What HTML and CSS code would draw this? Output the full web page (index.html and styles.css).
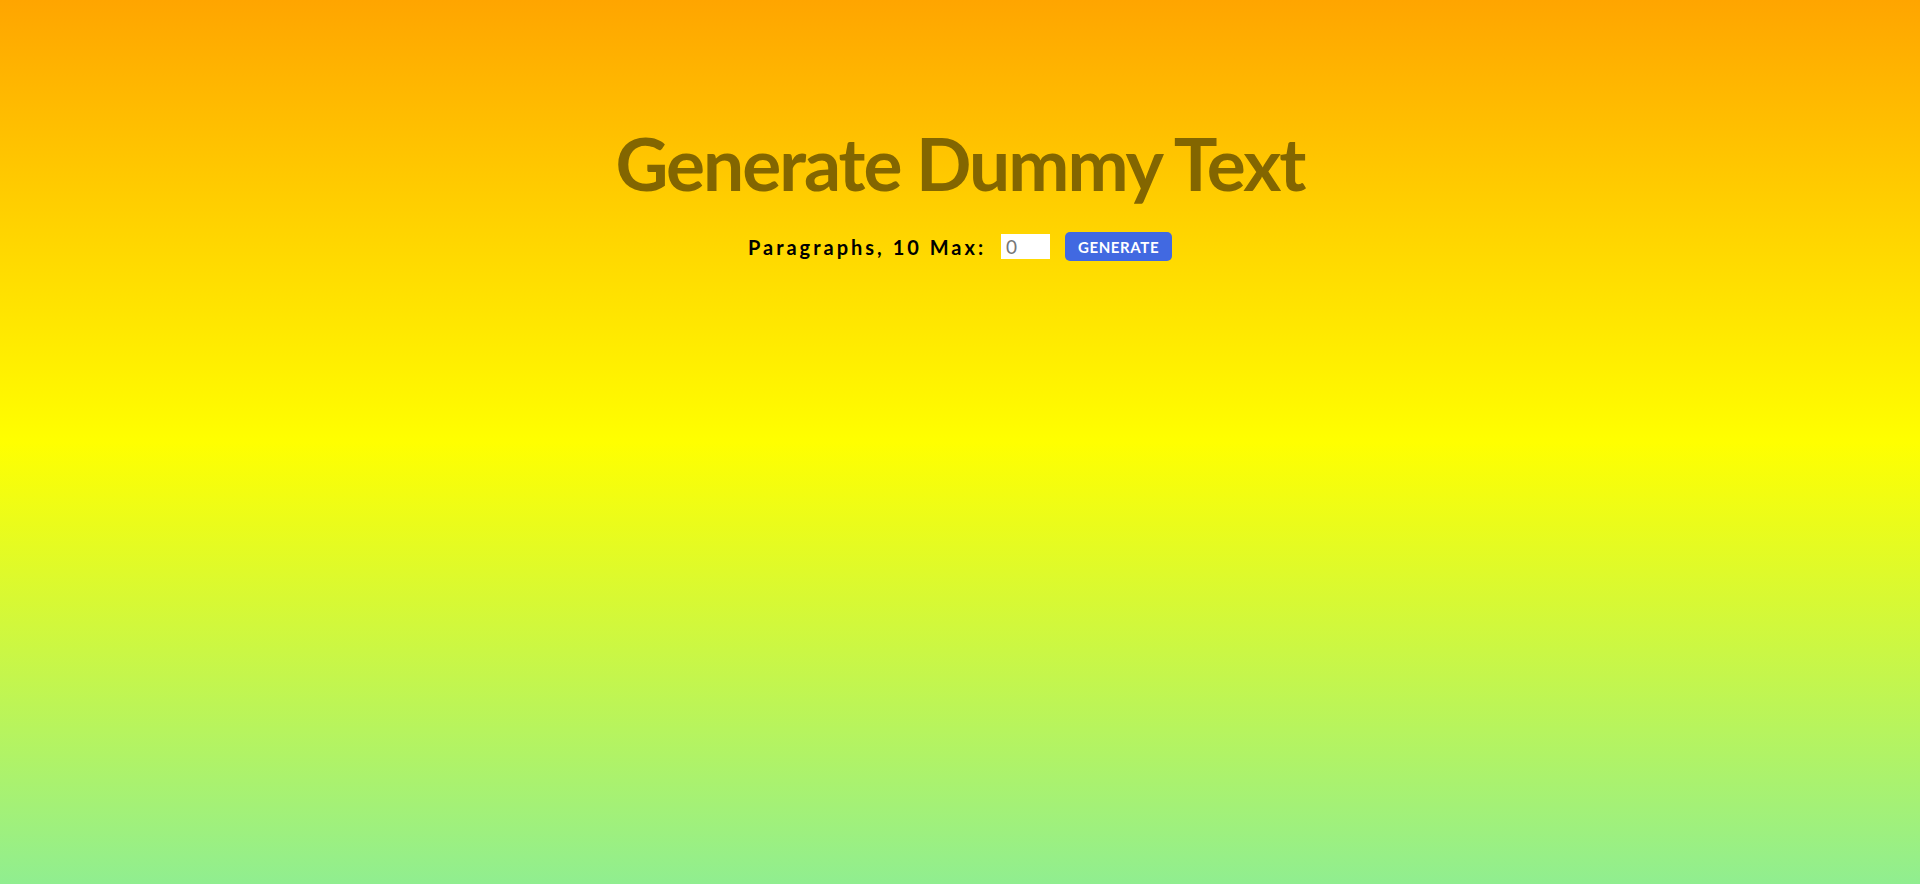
FILE: index.html
```html
<!DOCTYPE html>
<html lang="en">
<head>
<meta charset="utf-8">
<title>Generate Dummy Text</title>
<link rel="stylesheet" href="styles.css">
</head>
<body>
<main class="page">
  <h1 class="title">Generate Dummy Text</h1>
  <form class="controls">
    <label class="label" for="amount">Paragraphs, 10 Max:</label>
    <input class="amount" id="amount" type="number" placeholder="0" min="0" max="10">
    <button class="btn" type="button">Generate</button>
  </form>
</main>
</body>
</html>
```
FILE: styles.css
```css
html, body {
  margin: 0;
  padding: 0;
  height: 100%;
}
body {
  background: linear-gradient(to bottom, #ffa500 0%, #ffff00 50%, #90ee90 100%);
  font-family: Lato, "Open Sans", sans-serif;
}
.page {
  display: flex;
  flex-direction: column;
  align-items: center;
  padding-top: 119px;
}
.title {
  margin: 0;
  font-size: 73px;
  font-weight: 700;
  line-height: 89px;
  color: #836600;
  letter-spacing: -2px;
}
.controls {
  display: flex;
  align-items: center;
  margin-top: 24px;
  gap: 15px;
}
.label {
  font-size: 20px;
  font-weight: 700;
  letter-spacing: 3px;
  color: #000;
}
.amount {
  width: 49px;
  height: 25px;
  box-sizing: border-box;
  border: none;
  padding: 0 5px;
  font-family: Lato, sans-serif;
  font-size: 19px;
  background: #fff;
  -moz-appearance: textfield;
}
.amount::-webkit-outer-spin-button,
.amount::-webkit-inner-spin-button {
  -webkit-appearance: none;
  margin: 0;
}
.amount::placeholder {
  color: #777;
}
.btn {
  width: 107px;
  height: 29px;
  border: none;
  border-radius: 5px;
  background: #4169e1;
  color: #fff;
  font-family: Lato, sans-serif;
  font-weight: 700;
  font-size: 15px;
  letter-spacing: 0.6px;
  text-transform: uppercase;
  cursor: pointer;
}
```
